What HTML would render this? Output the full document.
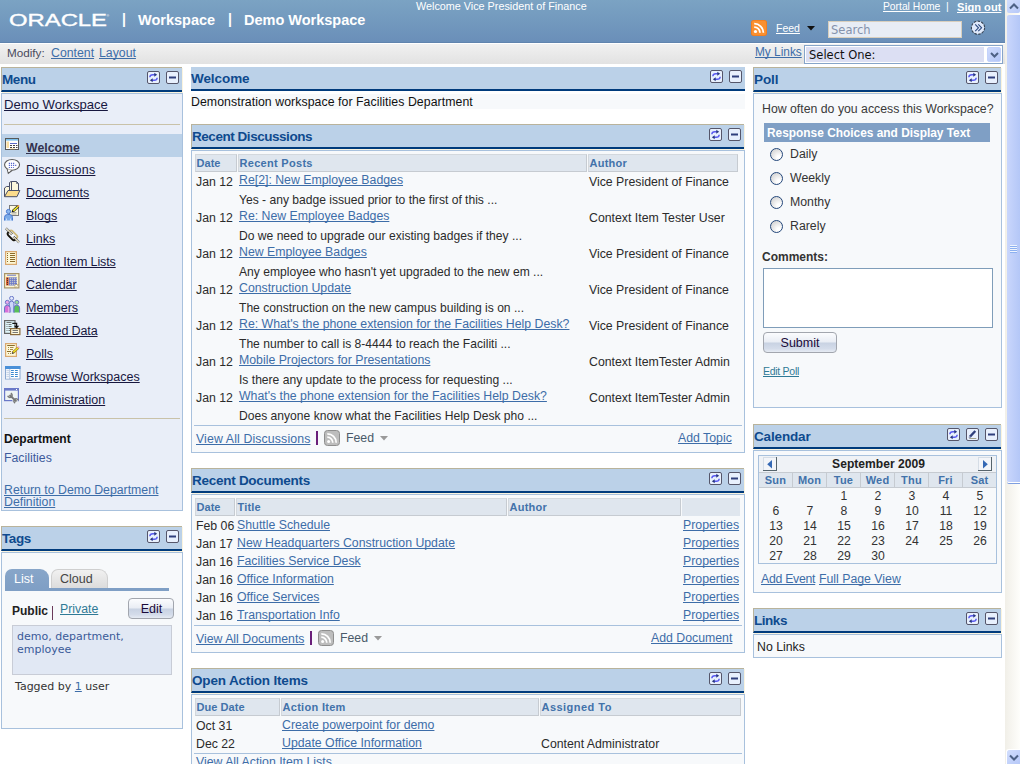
<!DOCTYPE html>
<html><head><meta charset="utf-8"><title>Demo Workspace</title>
<style>
*{box-sizing:border-box}
html,body{margin:0;padding:0}
body{width:1020px;height:764px;overflow:hidden;position:relative;background:#fff;font-family:"Liberation Sans",sans-serif;font-size:12.3px;color:#2b2b2b}
a{color:#3d6da8;text-decoration:underline;text-decoration-skip-ink:none}
.abs,.ph,.pb,.x{position:absolute}
.x{white-space:nowrap;line-height:14px}
#hdr{left:0;top:0;width:1005px;height:43px;background:linear-gradient(#7ba3c3,#6a8fb9);border-bottom:1px solid #6084ae}
#hdr .t{position:absolute;color:#fff;font-weight:bold;font-size:14.5px;top:12px;white-space:nowrap}
#hdr .sep{position:absolute;color:#fff;font-size:14px;font-weight:bold;top:11px}
#hdr a{color:#fff}
#bar{left:0;top:44px;width:1005px;height:20px;background:linear-gradient(#f1f1f1,#e2e2e2)}
.ph{height:25px;background:#bbd1e8;border-top:1px solid #b9b39b;border-left:1px solid #b9b39b;border-bottom:2px solid #003b7c;box-shadow:1px 1px 0 #fbf4de;color:#0e4a8e;font-weight:bold;font-size:13.5px;line-height:23px;padding-left:0px;white-space:nowrap}
.pb{background:#f7f9fb;border:1px solid #a8c1dd}
.ic{position:absolute;top:3px;width:13px;height:13px}
.th{position:absolute;height:18px;background:#dfe6ee;border:1px solid #c6cbd1;border-top-color:#d3d8dd;border-left-color:#d3d8dd;color:#4272aa;font-weight:bold;font-size:11px;line-height:16px;padding-left:0.5px;white-space:nowrap}
.mi{position:absolute;left:23px;color:#17173f;font-size:12.5px;white-space:nowrap;line-height:14px}
.mic{position:absolute;left:-1px;width:20px;height:18px}
.hr{position:absolute;height:1px;background:#c9c2a8}
.fl{position:absolute;height:1px;background:#a8c1dd}
.btn{position:absolute;border:1px solid #a2a6ae;border-radius:4px;background:linear-gradient(#fbfcfe 0%,#e9edf4 48%,#c8d2e2 52%,#d4dcea 82%,#e6ebf3 100%);color:#1a0a3a;font-size:12.5px;text-align:center;line-height:20px}
.rad{position:absolute;left:770px;width:13px;height:13px;border-radius:50%;border:1.300px solid #23477a;background:radial-gradient(circle at 72% 78%,#fff 15%,#c9c9c9 100%)}
.cd{position:absolute;width:34px;text-align:center;line-height:14px;color:#333;font-size:12.2px}
.dv{font-family:"DejaVu Sans","Liberation Sans",sans-serif}
</style></head><body>

<div id="hdr" class="abs">
<svg class="abs" style="left:8px;top:11px" width="104" height="18"><text x="1" y="14.900" fill="#fff" stroke="#fff" stroke-width="0.35" font-family="Liberation Sans, sans-serif" font-size="16.800" textLength="98" lengthAdjust="spacingAndGlyphs">ORACLE</text><text x="98.500" y="5.500" fill="#fff" font-family="Liberation Sans, sans-serif" font-size="3.500">®</text></svg>
<span class="sep" style="left:122px">|</span><span class="t" style="left:138px">Workspace</span>
<span class="sep" style="left:228px">|</span><span class="t" style="left:244px">Demo Workspace</span>
<span class="x" style="left:416px;top:-1px;color:#fff;font-size:10.8px">Welcome Vice President of Finance</span>
<a href="#" class="x" style="left:883px;top:0px;font-size:10.3px">Portal Home</a><span class="x" style="left:946px;top:-1px;color:#fff;font-size:10.5px">|</span>
<a href="#" class="x" style="left:957px;top:0px;font-weight:bold;font-size:11.1px">Sign out</a>
<svg class="abs" style="left:751px;top:20px" width="16" height="16" viewBox="0 0 15 15"><rect x="0" y="0" width="15" height="15" rx="2.500" fill="#f07c1e"/><rect x=".8" y=".8" width="13.400" height="13.400" rx="1.800" fill="#fa9030"/><circle cx="4.2" cy="10.8" r="1.5" fill="#fff"/><path d="M3 6.6a5.4 5.4 0 0 1 5.4 5.4M3 3.4a8.6 8.6 0 0 1 8.6 8.6" fill="none" stroke="#fff" stroke-width="1.7"/></svg>
<a href="#" class="x" style="left:776px;top:21px;font-size:10.5px">Feed</a>
<svg class="abs" style="left:807px;top:26px" width="8" height="5"><path d="M0 0h8L4 4.500z" fill="#111"/></svg>
<div class="abs dv" style="left:828px;top:21px;width:134px;height:17px;background:#e8edf5;border:1px solid #d9cfbd;color:#8492ac;font-size:11.5px;line-height:17px;padding-left:2px">Search</div>
<svg class="abs" style="left:970px;top:20px" width="16" height="16" viewBox="0 0 16 16"><circle cx="8" cy="7.700" r="6.600" fill="#dfe9fa" stroke="#384454" stroke-width="1.100" stroke-dasharray="2.600 1.200"/><path d="M5.200 4.400l3.300 3.400-3.300 3.400M8.300 4.400l3.300 3.400-3.300 3.400" fill="none" stroke="#2c4a80" stroke-width="1.100"/></svg>
</div>
<div id="bar" class="abs">
<span class="x" style="left:7px;top:2px;color:#4a4a5c;font-size:11.700px">Modify:</span><a href="#" class="x" style="left:51px;top:2px">Content</a><a href="#" class="x" style="left:99px;top:2px">Layout</a>
<a href="#" class="x" style="left:755px;top:1px;font-size:11.850px">My Links</a>
<div class="abs" style="left:804px;top:1px;width:199px;height:19px;background:#fff;border:1px solid #86a4c9"></div>
<div class="abs dv" style="left:806px;top:3px;width:178px;height:15px;background:#dcdff3;color:#111;font-size:11.500px;line-height:16px;padding-left:3px">Select One:</div>
<div class="abs" style="left:987px;top:3px;width:14px;height:15px;border-radius:2px;background:linear-gradient(135deg,#cfdbfd,#b3c6f7);border:1px solid #c3d2fb"></div>
<svg class="abs" style="left:990px;top:8px" width="9" height="7"><path d="M1 1l3.5 3.5L8 1" fill="none" stroke="#4d6185" stroke-width="2"/></svg>
</div>

<div class="ph" style="left:1px;top:67px;width:181px;letter-spacing:-0.43px">Menu<svg class="ic" style="left:145px" viewBox="0 0 13 13"><rect x=".5" y=".5" width="12" height="12" rx="1.500" fill="#e8f0fd" stroke="#55566a"/><path d="M2.800 6.300Q3 3.700 5.800 3.700H8" fill="none" stroke="#5a5af0" stroke-width="1.400"/><path d="M7.300 1.700l2.800 2-2.800 2z" fill="#26357e"/><path d="M10.200 6.700Q10 9.300 7.200 9.300H5" fill="none" stroke="#5a5af0" stroke-width="1.400"/><path d="M5.700 7.300l-2.800 2 2.800 2z" fill="#26357e"/></svg><svg class="ic" style="left:164px" viewBox="0 0 13 13"><rect x=".5" y=".5" width="12" height="12" rx="1.5" fill="#e8f0fd" stroke="#55566a"/><rect x="3" y="5.5" width="7" height="2" fill="#2f3f7c"/></svg></div>
<div class="pb" style="left:1px;top:93px;width:182px;height:418px;background:#e9eef8">
<div class="abs" style="left:0;top:40px;width:180px;height:23px;background:#bbd1e8"></div>
<div class="abs" style="left:1px;top:0">
<a href="#" class="mi" style="left:1px;top:4px;font-size:13.1px">Demo Workspace</a>
<div class="hr" style="left:1px;top:30px;width:176px"></div>
<svg class="mic" style="top:41px" viewBox="0 0 20 18"><rect x="3.5" y="3.5" width="13" height="11" fill="#fff" stroke="#595959"/><rect x="4" y="4" width="12" height="1.600" fill="#7ac0ec"/><rect x="4.500" y="6.500" width="2.500" height="6.500" fill="#f8dca0"/><path d="M8 8.500h7" stroke="#5a6ac8"/><path d="M8 10.500h7.500M8 12.500h7.500" stroke="#444" stroke-dasharray="2 1"/><path d="M8 13.700h5" stroke="#f8dca0" stroke-width=".8"/></svg>
<a href="#" class="mi" style="top:47px;font-weight:bold;color:#33334f;font-size:12.3px">Welcome</a>
<svg class="mic" style="top:64px" viewBox="0 0 20 18"><path d="M5.200 10.800L6.300 15.300L10.300 12.200" fill="#fff" stroke="#5a5a5a" stroke-width="1.100"/><ellipse cx="10.050" cy="6.850" rx="7.500" ry="5.400" fill="#fff" stroke="#5a5a5a" stroke-width="1.100"/><path d="M5.700 11.300l1 2.600 2.600-2.200z" fill="#fff"/><path d="M6.800 5.400h6M6.800 7.400h8M6.800 9.500h5" stroke="#5a6ad0" stroke-width="1.100" stroke-dasharray="1.200 .9"/></svg>
<a href="#" class="mi" style="top:69px;letter-spacing:.25px">Discussions</a>
<svg class="mic" style="top:87px" viewBox="0 0 20 18"><path d="M7.500 10V1.500L9 .5H13.500" fill="#fdf8dc" stroke="#4a5068"/><path d="M9.500 10V.5H14.500L16.500 2.500V10z" fill="#fdf8dc" stroke="#4a5068"/><path d="M14.500 .5V2.500H16.500" fill="none" stroke="#4a5068" stroke-width=".7"/><path d="M2.500 15.500V7L4.500 5.500H7.500V10" fill="#fdf8dc" stroke="#4a5068"/><path d="M6 9.500H17.800L15 15.700H2.500z" fill="#fbdc8c" stroke="#4a5068"/></svg>
<a href="#" class="mi" style="top:92px">Documents</a>
<svg class="mic" style="top:110px" viewBox="0 0 20 18"><rect x="7.500" y="1.500" width="9" height="10" fill="#fdf8dc" stroke="#7a7a7a"/><path d="M9.500 8.500h5M9.500 10h5" stroke="#999" stroke-width=".8"/><path d="M10.800 7.200L16.300 2.200" stroke="#222" stroke-width="2.800"/><path d="M11.300 6.800L16 2.500" stroke="#f4ea20" stroke-width="1.600"/><path d="M9.600 8.300l.6-2 1.500 1.500z" fill="#111"/><circle cx="16.400" cy="2.100" r="1" fill="#f09a4a"/><circle cx="6.500" cy="7.500" r="2.100" fill="#8ab8f0" stroke="#4a7ad0"/><path d="M2.500 16.500V13.500a3 3 0 0 1 3-3h2a3 3 0 0 1 3 3V16.500" fill="#7aaae8" stroke="#4a7ad0"/><path d="M4.500 16.500v-2M8.500 16.500v-2" stroke="#dfeafc" stroke-width=".8"/></svg>
<a href="#" class="mi" style="top:115px">Blogs</a>
<svg class="mic" style="top:133px" viewBox="0 0 20 18"><g transform="translate(10.500 8.300) rotate(45)"><rect x="-5" y="-3" width="10" height="6" rx="2" fill="none" stroke="#cdb877" stroke-width="1.700"/><path d="M-5 -.5v1.500a2 2 0 0 0 2 2h6a2 2 0 0 0 2-2V.5" fill="none" stroke="#111" stroke-width="1.700"/><circle r="1.300" fill="#fff"/></g><path d="M4 1.300L10 7.300M11.500 9.800L17 15.300" stroke="#2a2a2a" stroke-width="2.400" stroke-dasharray="1 .5"/><path d="M4 1.300L10 7.300M11.500 9.800L17 15.300" stroke="#f3ebcd" stroke-width="1.200"/></svg>
<a href="#" class="mi" style="top:138px">Links</a>
<svg class="mic" style="top:156px" viewBox="0 0 20 18"><rect x="3.600" y="1.600" width="10.800" height="12.800" fill="#fdf8d8" stroke="#d9a870" stroke-width="1.200"/><path d="M5 3.500h1M5 5.500h1M5 7.500h1M5 9.500h1M5 11.500h1M8 3.500h5M8 5.500h5M8 7.500h5M8 9.500h5M8 11.500h5" stroke="#8a6a2a"/></svg>
<a href="#" class="mi" style="top:161px;letter-spacing:-.12px">Action Item Lists</a>
<svg class="mic" style="top:179px" viewBox="0 0 20 18"><rect x="2.600" y=".6" width="14.300" height="14.300" fill="#fdf6d0" stroke="#a89468" stroke-width="1.200"/><path d="M5 2.200h9" stroke="#6a78c8"/><rect x="4" y="4.300" width="2.800" height="8.200" fill="#e86a3a"/><rect x="6.800" y="4.300" width="8.200" height="8.200" fill="#6a78c8"/><path d="M4.900 5.300h1M4.900 7.300h1M4.900 9.300h1M4.900 11.300h1" stroke="#111"/><path d="M7.800 5.300h7M7.800 7.300h7M7.800 9.300h7M7.800 11.300h5" stroke="#fdf6d0" stroke-width=".9" stroke-dasharray="1 1"/><path d="M13 15V11.500H16.800z" fill="#fdf6d0" stroke="#a89468" stroke-width=".6"/><circle cx="14.300" cy="12.800" r=".7" fill="#fff"/></svg>
<a href="#" class="mi" style="top:184px">Calendar</a>
<svg class="mic" style="top:202px" viewBox="0 0 20 18"><circle cx="9.600" cy="2.300" r="2" fill="#e4eafd" stroke="#6a78c8"/><path d="M7.300 16.500V7.500a2.300 2.300 0 0 1 4.600 0V16.500" fill="#ccd6fa" stroke="#6a78c8"/><circle cx="5.300" cy="6.300" r="2" fill="#eaa8ea" stroke="#6a78c8"/><path d="M2.500 16.500V12a2.800 2.800 0 0 1 5.600 0V16.500" fill="#d870d8" stroke="#6a78c8"/><circle cx="14.800" cy="6.300" r="2" fill="#98dc98" stroke="#6a78c8"/><path d="M12 16.500V12a2.800 2.800 0 0 1 5.600 0V16.500" fill="#58c058" stroke="#6a78c8"/><path d="M6.800 16.500V11" stroke="#f4d8f4" stroke-width=".8"/></svg>
<a href="#" class="mi" style="top:207px">Members</a>
<svg class="mic" style="top:225px" viewBox="0 0 20 18"><rect x="2.600" y="1.600" width="10.400" height="12.800" fill="#dff6fb" stroke="#666" stroke-width="1.200"/><path d="M4.500 3.500h5M4.500 5.500h1M6.500 5.500h3M4.500 7.500h1M6.500 7.500h3M4.500 9.500h1M6.500 9.500h1.500M4.500 11.500h1M6.500 11.500h1.500" stroke="#777"/><rect x="8.600" y="9.600" width="9.300" height="6" fill="#fdf8dc" stroke="#8a6a3a" stroke-width="1.200"/><path d="M10.500 11.500h5.500M10.500 13.500h5.500" stroke="#777"/><path d="M10.300 4.300H14.600V8" fill="none" stroke="#111" stroke-width="1.300"/><path d="M12 6.800h5.200l-2.600 2.900z" fill="#111"/></svg>
<a href="#" class="mi" style="top:230px;letter-spacing:-.12px">Related Data</a>
<svg class="mic" style="top:248px" viewBox="0 0 20 18"><rect x="3.600" y="1.600" width="10.800" height="12.800" fill="#fdf8d8" stroke="#d9a870" stroke-width="1.200"/><path d="M5.200 3.500h7.600M5 9.500h4" stroke="#8a6a2a" stroke-width="1.100"/><path d="M6 5.500h1M8 5.500h3.500M6 7.500h1M8 7.500h3M6 11.500h1M8 11.500h1" stroke="#a88a4a"/><path d="M10.800 10.800L16.400 5.600" stroke="#8a6a2a" stroke-width="2.600"/><path d="M11.300 10.300L16.200 5.800" stroke="#f4ea20" stroke-width="1.500"/><path d="M9.700 11.900l.6-2 1.500 1.500z" fill="#333"/><circle cx="16.600" cy="5.300" r="1" fill="#f0a8c8"/></svg>
<a href="#" class="mi" style="top:253px">Polls</a>
<svg class="mic" style="top:271px" viewBox="0 0 20 18"><rect x="3.500" y="1.500" width="14.500" height="12.500" fill="#fff" stroke="#8aa8d0"/><rect x="3" y="1" width="15.500" height="3" fill="#4a90d8"/><rect x="4" y="4" width="3.500" height="9.500" fill="#f0f4fa"/><path d="M7.800 4v10" stroke="#9ab4d8" stroke-width=".8"/><path d="M4.500 5.500h2.500M4.500 7.500h2.500M4.500 9.500h2.500M4.500 11.500h2.500" stroke="#b8c8e0" stroke-width=".7"/><path d="M9 5.500h2.800M13 5.500h2.800M9 7.500h2.800M13 7.500h2.800M9 9.500h2.800M13 9.500h2.800M9 11.500h2.800M13 11.500h2.800" stroke="#3a8ad0" stroke-width="1.200"/></svg>
<a href="#" class="mi" style="top:276px">Browse Workspaces</a>
<svg class="mic" style="top:294px" viewBox="0 0 20 18"><rect x="2.600" y=".6" width="13.800" height="12" fill="#eef4f4" stroke="#6a78c8" stroke-width="1.200"/><rect x="2.600" y=".6" width="13.800" height="2" fill="#6a78c8"/><rect x="14" y="1" width="1" height="1" fill="#fff"/><path d="M7 6.500L15 14" stroke="#eef4f4" stroke-width="4"/><path d="M7.500 7L14.500 13.500" stroke="#777" stroke-width="1.800"/><path d="M8.800 5.200a2.200 2.200 0 1 1-3 2.600" fill="none" stroke="#777" stroke-width="1.500"/><path d="M13.200 15a2.200 2.200 0 1 1 3-2.600" fill="none" stroke="#777" stroke-width="1.500"/></svg>
<a href="#" class="mi" style="top:299px">Administration</a>
<div class="hr" style="left:1px;top:324px;width:176px"></div>
<span class="x" style="left:1px;top:338px;font-weight:bold;color:#111;font-size:12px">Department</span>
<span class="x" style="left:1px;top:357px;color:#3d5a9c">Facilities</span>
<a href="#" class="abs" style="left:1px;top:390px;width:170px;line-height:12px">Return to Demo Department Definition</a>
</div></div>
<div class="ph" style="left:1px;top:526px;width:181px;letter-spacing:-0.42px">Tags<svg class="ic" style="left:145px" viewBox="0 0 13 13"><rect x=".5" y=".5" width="12" height="12" rx="1.500" fill="#e8f0fd" stroke="#55566a"/><path d="M2.800 6.300Q3 3.700 5.800 3.700H8" fill="none" stroke="#5a5af0" stroke-width="1.400"/><path d="M7.300 1.700l2.800 2-2.800 2z" fill="#26357e"/><path d="M10.200 6.700Q10 9.300 7.200 9.300H5" fill="none" stroke="#5a5af0" stroke-width="1.400"/><path d="M5.700 7.300l-2.800 2 2.800 2z" fill="#26357e"/></svg><svg class="ic" style="left:164px" viewBox="0 0 13 13"><rect x=".5" y=".5" width="12" height="12" rx="1.5" fill="#e8f0fd" stroke="#55566a"/><rect x="3" y="5.5" width="7" height="2" fill="#2f3f7c"/></svg></div>
<div class="pb" style="left:1px;top:552px;width:182px;height:177px">
<div class="abs" style="left:1px;top:0">
<div class="abs" style="left:2px;top:35px;width:164px;height:3px;background:#7f9fc5"></div>
<div class="abs" style="left:2px;top:16px;width:44px;height:20px;background:linear-gradient(#88a6c9,#7f9fc5);border-radius:7px 9px 0 0;color:#fff;font-size:12.500px;text-align:left;padding-left:9px;line-height:21px">List</div>
<div class="abs" style="left:48px;top:16px;width:57px;height:19px;background:linear-gradient(#f1f1f1,#dcdcdc);border:1px solid #cfcfcf;border-bottom:none;border-radius:7px 9px 0 0;color:#444;font-size:12.500px;text-align:left;padding-left:8px;line-height:19px">Cloud</div>
<span class="x" style="left:9px;top:51px;font-weight:bold;color:#222;font-size:12px">Public</span><span class="abs" style="left:49px;top:53px;width:1px;height:14px;background:#6a3a5a"></span>
<a href="#" class="x" style="left:57px;top:49px;color:#2f7a96">Private</a>
<div class="btn" style="left:125px;top:45px;width:46px;height:21px;padding-left:1px;line-height:20px">Edit</div>
<div class="abs dv" style="left:9px;top:72px;width:160px;height:50px;background:#e1e8f4;border:1px solid #c8ccd6;color:#3a5a98;font-size:11px;line-height:13px;padding:4px 0 0 4px">demo, department,<br>employee</div>
<span class="x dv" style="left:12px;top:127px;font-size:11px;color:#333">Tagged by <a href="#">1</a> user</span>
</div></div>
<div class="ph" style="left:191px;top:67px;width:554px;letter-spacing:-0.07px;border-top:none;border-left:none;height:24px;padding-left:0;box-shadow:none">Welcome<svg class="ic" style="left:519px" viewBox="0 0 13 13"><rect x=".5" y=".5" width="12" height="12" rx="1.500" fill="#e8f0fd" stroke="#55566a"/><path d="M2.800 6.300Q3 3.700 5.800 3.700H8" fill="none" stroke="#5a5af0" stroke-width="1.400"/><path d="M7.300 1.700l2.800 2-2.800 2z" fill="#26357e"/><path d="M10.200 6.700Q10 9.300 7.200 9.300H5" fill="none" stroke="#5a5af0" stroke-width="1.400"/><path d="M5.700 7.300l-2.800 2 2.800 2z" fill="#26357e"/></svg><svg class="ic" style="left:538px" viewBox="0 0 13 13"><rect x=".5" y=".5" width="12" height="12" rx="1.5" fill="#e8f0fd" stroke="#55566a"/><rect x="3" y="5.5" width="7" height="2" fill="#2f3f7c"/></svg></div>
<div class="abs" style="left:191px;top:94px;width:554px;height:15px;background:#f7f9fb"></div>
<span class="x" style="left:191px;top:95px;color:#111;letter-spacing:.06px">Demonstration workspace for Facilities Department</span>
<div class="ph" style="left:191px;top:124px;width:553px;letter-spacing:-0.46px">Recent Discussions<svg class="ic" style="left:517px" viewBox="0 0 13 13"><rect x=".5" y=".5" width="12" height="12" rx="1.500" fill="#e8f0fd" stroke="#55566a"/><path d="M2.800 6.300Q3 3.700 5.800 3.700H8" fill="none" stroke="#5a5af0" stroke-width="1.400"/><path d="M7.300 1.700l2.800 2-2.800 2z" fill="#26357e"/><path d="M10.200 6.700Q10 9.300 7.200 9.300H5" fill="none" stroke="#5a5af0" stroke-width="1.400"/><path d="M5.700 7.300l-2.800 2 2.800 2z" fill="#26357e"/></svg><svg class="ic" style="left:536px" viewBox="0 0 13 13"><rect x=".5" y=".5" width="12" height="12" rx="1.5" fill="#e8f0fd" stroke="#55566a"/><rect x="3" y="5.5" width="7" height="2" fill="#2f3f7c"/></svg></div>
<div class="pb" style="left:191px;top:150px;width:554px;height:303px">
<div class="th" style="left:3px;top:3px;width:42px;letter-spacing:0.05px">Date</div>
<div class="th" style="left:46px;top:3px;width:349px;letter-spacing:0.30px">Recent Posts</div>
<div class="th" style="left:396px;top:3px;width:150px;letter-spacing:0.25px">Author</div>
<span class="x" style="left:4px;top:24px">Jan 12</span>
<a href="#" class="x" style="left:47px;top:22px">Re[2]: New Employee Badges</a>
<span class="x" style="left:397px;top:24px">Vice President of Finance</span>
<span class="x" style="left:47px;top:42px;font-size:12.1px">Yes - any badge issued prior to the first of this ...</span>
<span class="x" style="left:4px;top:60px">Jan 12</span>
<a href="#" class="x" style="left:47px;top:58px">Re: New Employee Badges</a>
<span class="x" style="left:397px;top:60px">Context Item Tester User</span>
<span class="x" style="left:47px;top:78px;font-size:12.1px">Do we need to upgrade our existing badges if they ...</span>
<span class="x" style="left:4px;top:96px">Jan 12</span>
<a href="#" class="x" style="left:47px;top:94px">New Employee Badges</a>
<span class="x" style="left:397px;top:96px">Vice President of Finance</span>
<span class="x" style="left:47px;top:114px;font-size:12.1px">Any employee who hasn't yet upgraded to the new em ...</span>
<span class="x" style="left:4px;top:132px">Jan 12</span>
<a href="#" class="x" style="left:47px;top:130px">Construction Update</a>
<span class="x" style="left:397px;top:132px">Vice President of Finance</span>
<span class="x" style="left:47px;top:150px;font-size:12.1px">The construction on the new campus building is on ...</span>
<span class="x" style="left:4px;top:168px">Jan 12</span>
<a href="#" class="x" style="left:47px;top:166px">Re: What's the phone extension for the Facilities Help Desk?</a>
<span class="x" style="left:397px;top:168px">Vice President of Finance</span>
<span class="x" style="left:47px;top:186px;font-size:12.1px">The number to call is 8-4444 to reach the Faciliti ...</span>
<span class="x" style="left:4px;top:204px">Jan 12</span>
<a href="#" class="x" style="left:47px;top:202px">Mobile Projectors for Presentations</a>
<span class="x" style="left:397px;top:204px">Context ItemTester Admin</span>
<span class="x" style="left:47px;top:222px;font-size:12.1px">Is there any update to the process for requesting ...</span>
<span class="x" style="left:4px;top:240px">Jan 12</span>
<a href="#" class="x" style="left:47px;top:238px">What's the phone extension for the Facilities Help Desk?</a>
<span class="x" style="left:397px;top:240px">Context ItemTester Admin</span>
<span class="x" style="left:47px;top:258px;font-size:12.1px">Does anyone know what the Facilities Help Desk pho ...</span>
<div class="fl" style="left:2px;top:274px;width:548px"></div>
<a href="#" class="x" style="left:4px;top:281px;letter-spacing:.13px">View All Discussions</a>
<span class="abs" style="left:124px;top:280px;width:1.500px;height:14px;background:#6a1f7a"></span>
<svg class="abs" style="left:132px;top:279px" width="16" height="16" viewBox="0 0 16 16"><rect x=".5" y=".5" width="15" height="15" rx="3" fill="#bdbdbd" stroke="#8e8e8e"/><circle cx="4.600" cy="11.400" r="1.500" fill="#fff"/><path d="M3.300 7.200a5.500 5.500 0 0 1 5.500 5.500M3.300 3.800a8.900 8.900 0 0 1 8.900 8.900" fill="none" stroke="#fff" stroke-width="1.700"/></svg>
<span class="x" style="left:154px;top:280px;color:#4a5a6a">Feed</span>
<svg class="abs" style="left:188px;top:285px" width="8" height="5"><path d="M0 0h8L4 4.500z" fill="#9a9a9a"/></svg>
<a href="#" class="x" style="left:486px;top:280px">Add Topic</a>
</div>
<div class="ph" style="left:191px;top:468px;width:553px;letter-spacing:-0.27px">Recent Documents<svg class="ic" style="left:517px" viewBox="0 0 13 13"><rect x=".5" y=".5" width="12" height="12" rx="1.500" fill="#e8f0fd" stroke="#55566a"/><path d="M2.800 6.300Q3 3.700 5.800 3.700H8" fill="none" stroke="#5a5af0" stroke-width="1.400"/><path d="M7.300 1.700l2.800 2-2.800 2z" fill="#26357e"/><path d="M10.200 6.700Q10 9.300 7.200 9.300H5" fill="none" stroke="#5a5af0" stroke-width="1.400"/><path d="M5.700 7.300l-2.800 2 2.800 2z" fill="#26357e"/></svg><svg class="ic" style="left:536px" viewBox="0 0 13 13"><rect x=".5" y=".5" width="12" height="12" rx="1.5" fill="#e8f0fd" stroke="#55566a"/><rect x="3" y="5.5" width="7" height="2" fill="#2f3f7c"/></svg></div>
<div class="pb" style="left:191px;top:494px;width:554px;height:159px">
<div class="th" style="left:3px;top:3px;width:40px;letter-spacing:0.05px">Date</div>
<div class="th" style="left:44px;top:3px;width:271px;letter-spacing:0.20px">Title</div>
<div class="th" style="left:316px;top:3px;width:173px;letter-spacing:0.25px">Author</div>
<div class="abs" style="left:490px;top:3px;width:58px;height:18px;background:#dfe6ee"></div>
<span class="x" style="left:4px;top:24px">Feb 06</span>
<a href="#" class="x" style="left:45px;top:23px">Shuttle Schedule</a>
<a href="#" class="x" style="left:491px;top:23px">Properties</a>
<span class="x" style="left:4px;top:42px">Jan 17</span>
<a href="#" class="x" style="left:45px;top:41px">New Headquarters Construction Update</a>
<a href="#" class="x" style="left:491px;top:41px">Properties</a>
<span class="x" style="left:4px;top:60px">Jan 16</span>
<a href="#" class="x" style="left:45px;top:59px">Facilities Service Desk</a>
<a href="#" class="x" style="left:491px;top:59px">Properties</a>
<span class="x" style="left:4px;top:78px">Jan 16</span>
<a href="#" class="x" style="left:45px;top:77px">Office Information</a>
<a href="#" class="x" style="left:491px;top:77px">Properties</a>
<span class="x" style="left:4px;top:96px">Jan 16</span>
<a href="#" class="x" style="left:45px;top:95px">Office Services</a>
<a href="#" class="x" style="left:491px;top:95px">Properties</a>
<span class="x" style="left:4px;top:114px">Jan 16</span>
<a href="#" class="x" style="left:45px;top:113px">Transportation Info</a>
<a href="#" class="x" style="left:491px;top:113px">Properties</a>
<div class="fl" style="left:2px;top:130px;width:548px"></div>
<a href="#" class="x" style="left:4px;top:137px">View All Documents</a>
<span class="abs" style="left:118px;top:136px;width:1.500px;height:14px;background:#6a1f7a"></span>
<svg class="abs" style="left:126px;top:135px" width="16" height="16" viewBox="0 0 16 16"><rect x=".5" y=".5" width="15" height="15" rx="3" fill="#bdbdbd" stroke="#8e8e8e"/><circle cx="4.600" cy="11.400" r="1.500" fill="#fff"/><path d="M3.300 7.200a5.500 5.500 0 0 1 5.500 5.500M3.300 3.800a8.900 8.900 0 0 1 8.900 8.900" fill="none" stroke="#fff" stroke-width="1.700"/></svg>
<span class="x" style="left:148px;top:136px;color:#4a5a6a">Feed</span>
<svg class="abs" style="left:182px;top:141px" width="8" height="5"><path d="M0 0h8L4 4.500z" fill="#9a9a9a"/></svg>
<a href="#" class="x" style="left:459px;top:136px">Add Document</a>
</div>
<div class="ph" style="left:191px;top:668px;width:553px;letter-spacing:-0.17px">Open Action Items<svg class="ic" style="left:517px" viewBox="0 0 13 13"><rect x=".5" y=".5" width="12" height="12" rx="1.500" fill="#e8f0fd" stroke="#55566a"/><path d="M2.800 6.300Q3 3.700 5.800 3.700H8" fill="none" stroke="#5a5af0" stroke-width="1.400"/><path d="M7.300 1.700l2.800 2-2.800 2z" fill="#26357e"/><path d="M10.200 6.700Q10 9.300 7.200 9.300H5" fill="none" stroke="#5a5af0" stroke-width="1.400"/><path d="M5.700 7.300l-2.800 2 2.800 2z" fill="#26357e"/></svg><svg class="ic" style="left:536px" viewBox="0 0 13 13"><rect x=".5" y=".5" width="12" height="12" rx="1.5" fill="#e8f0fd" stroke="#55566a"/><rect x="3" y="5.5" width="7" height="2" fill="#2f3f7c"/></svg></div>
<div class="pb" style="left:191px;top:694px;width:554px;height:100px">
<div class="th" style="left:3px;top:3px;width:85px;letter-spacing:0.05px">Due Date</div>
<div class="th" style="left:89px;top:3px;width:258px;letter-spacing:0.30px">Action Item</div>
<div class="th" style="left:348px;top:3px;width:201px;letter-spacing:0.47px">Assigned To</div>
<span class="x" style="left:4px;top:24px">Oct 31</span>
<a href="#" class="x" style="left:90px;top:23px">Create powerpoint for demo</a>
<span class="x" style="left:4px;top:42px">Dec 22</span>
<a href="#" class="x" style="left:90px;top:41px">Update Office Information</a>
<span class="x" style="left:349px;top:42px">Content Administrator</span>
<div class="fl" style="left:2px;top:58px;width:548px"></div>
<a href="#" class="x" style="left:4px;top:60px">View All Action Item Lists</a>
</div>
<div class="ph" style="left:753px;top:67px;width:248px;letter-spacing:-0.11px">Poll<svg class="ic" style="left:212px" viewBox="0 0 13 13"><rect x=".5" y=".5" width="12" height="12" rx="1.500" fill="#e8f0fd" stroke="#55566a"/><path d="M2.800 6.300Q3 3.700 5.800 3.700H8" fill="none" stroke="#5a5af0" stroke-width="1.400"/><path d="M7.300 1.700l2.800 2-2.800 2z" fill="#26357e"/><path d="M10.200 6.700Q10 9.300 7.200 9.300H5" fill="none" stroke="#5a5af0" stroke-width="1.400"/><path d="M5.700 7.300l-2.800 2 2.800 2z" fill="#26357e"/></svg><svg class="ic" style="left:231px" viewBox="0 0 13 13"><rect x=".5" y=".5" width="12" height="12" rx="1.5" fill="#e8f0fd" stroke="#55566a"/><rect x="3" y="5.5" width="7" height="2" fill="#2f3f7c"/></svg></div>
<div class="pb" style="left:753px;top:93px;width:249px;height:315px">
<span class="x" style="left:8px;top:8px;color:#3a3a3a">How often do you access this Workspace?</span>
<div class="abs" style="left:10px;top:29px;width:226px;height:19px;background:#7f9fc5;color:#fff;font-weight:bold;font-size:11.900px;line-height:20px;padding-left:3px;white-space:nowrap">Response Choices and Display Text</div>
<div class="rad" style="left:16px;top:54px"></div>
<span class="x" style="left:36px;top:53px;color:#333">Daily</span>
<div class="rad" style="left:16px;top:78px"></div>
<span class="x" style="left:36px;top:77px;color:#333">Weekly</span>
<div class="rad" style="left:16px;top:102px"></div>
<span class="x" style="left:36px;top:101px;color:#333">Monthy</span>
<div class="rad" style="left:16px;top:126px"></div>
<span class="x" style="left:36px;top:125px;color:#333">Rarely</span>
<span class="x" style="left:8px;top:156px;font-weight:bold;color:#333;font-size:12px">Comments:</span>
<div class="abs" style="left:9px;top:174px;width:230px;height:60px;background:#fff;border:1px solid #7f9db9"></div>
<div class="btn" style="left:9px;top:238px;width:74px;height:21px">Submit</div>
<a href="#" class="x" style="left:9px;top:270px;font-size:10.500px;letter-spacing:-.28px;color:#2f7a96">Edit Poll</a>
</div>
<div class="ph" style="left:753px;top:424px;width:248px;letter-spacing:-0.15px">Calendar<svg class="ic" style="left:193px" viewBox="0 0 13 13"><rect x=".5" y=".5" width="12" height="12" rx="1.500" fill="#e8f0fd" stroke="#55566a"/><path d="M2.800 6.300Q3 3.700 5.800 3.700H8" fill="none" stroke="#5a5af0" stroke-width="1.400"/><path d="M7.300 1.700l2.800 2-2.800 2z" fill="#26357e"/><path d="M10.200 6.700Q10 9.300 7.200 9.300H5" fill="none" stroke="#5a5af0" stroke-width="1.400"/><path d="M5.700 7.300l-2.800 2 2.800 2z" fill="#26357e"/></svg><svg class="ic" style="left:212px" viewBox="0 0 13 13"><rect x=".5" y=".5" width="12" height="12" rx="1.500" fill="#e8f0fd" stroke="#55566a"/><path d="M3.300 10.500h7" stroke="#a3a38c" stroke-width="1"/><path d="M4 8.600L9.300 3" stroke="#2f3f7c" stroke-width="2.300"/><path d="M3 9.800l.5-1.800 1.400 1.300z" fill="#fff" stroke="#2f3f7c" stroke-width=".4"/></svg><svg class="ic" style="left:231px" viewBox="0 0 13 13"><rect x=".5" y=".5" width="12" height="12" rx="1.5" fill="#e8f0fd" stroke="#55566a"/><rect x="3" y="5.5" width="7" height="2" fill="#2f3f7c"/></svg></div>
<div class="pb" style="left:753px;top:450px;width:249px;height:143px">
<div class="abs" style="left:4px;top:4px;width:239px;height:109px;border:1px solid #a8c1dd"></div>
<div class="abs" style="left:5px;top:5px;width:237px;height:16px;background:#eff2f6"></div>
<div class="abs" style="left:5px;top:6px;width:237px;text-align:center;font-weight:bold;color:#222;line-height:14px;font-size:12.1px;padding-left:2px">September 2009</div>
<svg class="abs" style="left:9px;top:6px" width="14" height="14" viewBox="0 0 14 14"><rect x="0" y="0" width="14" height="14" fill="#56646c"/><rect x="0" y="0" width="13" height="13" fill="#d5dde6"/><rect x="1" y="1" width="12" height="12" fill="#f3f5f9"/><path d="M9 3v8.500L4.200 7.200z" fill="#3468b4"/></svg>
<svg class="abs" style="left:224px;top:6px" width="14" height="14" viewBox="0 0 14 14"><rect x="0" y="0" width="14" height="14" fill="#56646c"/><rect x="0" y="0" width="13" height="13" fill="#d5dde6"/><rect x="1" y="1" width="12" height="12" fill="#f3f5f9"/><path d="M5 3v8.500L9.800 7.200z" fill="#3468b4"/></svg>
<div class="abs" style="left:5px;top:21px;width:34px;height:16px;background:#dfe6ee;border-top:1px solid #c6cbd1;border-bottom:1px solid #c6cbd1;border-right:1px solid #c6cbd1;text-align:center;color:#4272aa;font-weight:bold;font-size:11px;line-height:15px;letter-spacing:.2px">Sun</div>
<div class="abs" style="left:39px;top:21px;width:34px;height:16px;background:#dfe6ee;border-top:1px solid #c6cbd1;border-bottom:1px solid #c6cbd1;border-right:1px solid #c6cbd1;text-align:center;color:#4272aa;font-weight:bold;font-size:11px;line-height:15px;letter-spacing:.2px">Mon</div>
<div class="abs" style="left:73px;top:21px;width:34px;height:16px;background:#dfe6ee;border-top:1px solid #c6cbd1;border-bottom:1px solid #c6cbd1;border-right:1px solid #c6cbd1;text-align:center;color:#4272aa;font-weight:bold;font-size:11px;line-height:15px;letter-spacing:.2px">Tue</div>
<div class="abs" style="left:107px;top:21px;width:34px;height:16px;background:#dfe6ee;border-top:1px solid #c6cbd1;border-bottom:1px solid #c6cbd1;border-right:1px solid #c6cbd1;text-align:center;color:#4272aa;font-weight:bold;font-size:11px;line-height:15px;letter-spacing:.2px">Wed</div>
<div class="abs" style="left:141px;top:21px;width:34px;height:16px;background:#dfe6ee;border-top:1px solid #c6cbd1;border-bottom:1px solid #c6cbd1;border-right:1px solid #c6cbd1;text-align:center;color:#4272aa;font-weight:bold;font-size:11px;line-height:15px;letter-spacing:.2px">Thu</div>
<div class="abs" style="left:175px;top:21px;width:34px;height:16px;background:#dfe6ee;border-top:1px solid #c6cbd1;border-bottom:1px solid #c6cbd1;border-right:1px solid #c6cbd1;text-align:center;color:#4272aa;font-weight:bold;font-size:11px;line-height:15px;letter-spacing:.2px">Fri</div>
<div class="abs" style="left:209px;top:21px;width:33px;height:16px;background:#dfe6ee;border-top:1px solid #c6cbd1;border-bottom:1px solid #c6cbd1;text-align:center;color:#4272aa;font-weight:bold;font-size:11px;line-height:15px;letter-spacing:.2px">Sat</div>
<span class="cd" style="left:73px;top:38px">1</span>
<span class="cd" style="left:107px;top:38px">2</span>
<span class="cd" style="left:141px;top:38px">3</span>
<span class="cd" style="left:175px;top:38px">4</span>
<span class="cd" style="left:209px;top:38px">5</span>
<span class="cd" style="left:5px;top:53px">6</span>
<span class="cd" style="left:39px;top:53px">7</span>
<span class="cd" style="left:73px;top:53px">8</span>
<span class="cd" style="left:107px;top:53px">9</span>
<span class="cd" style="left:141px;top:53px">10</span>
<span class="cd" style="left:175px;top:53px">11</span>
<span class="cd" style="left:209px;top:53px">12</span>
<span class="cd" style="left:5px;top:68px">13</span>
<span class="cd" style="left:39px;top:68px">14</span>
<span class="cd" style="left:73px;top:68px">15</span>
<span class="cd" style="left:107px;top:68px">16</span>
<span class="cd" style="left:141px;top:68px">17</span>
<span class="cd" style="left:175px;top:68px">18</span>
<span class="cd" style="left:209px;top:68px">19</span>
<span class="cd" style="left:5px;top:83px">20</span>
<span class="cd" style="left:39px;top:83px">21</span>
<span class="cd" style="left:73px;top:83px">22</span>
<span class="cd" style="left:107px;top:83px">23</span>
<span class="cd" style="left:141px;top:83px">24</span>
<span class="cd" style="left:175px;top:83px">25</span>
<span class="cd" style="left:209px;top:83px">26</span>
<span class="cd" style="left:5px;top:98px">27</span>
<span class="cd" style="left:39px;top:98px">28</span>
<span class="cd" style="left:73px;top:98px">29</span>
<span class="cd" style="left:107px;top:98px">30</span>
<a href="#" class="x" style="left:7px;top:121px;letter-spacing:-.28px">Add Event</a>
<a href="#" class="x" style="left:65px;top:121px">Full Page View</a>
</div>
<div class="ph" style="left:753px;top:608px;width:248px;letter-spacing:-0.46px">Links<svg class="ic" style="left:212px" viewBox="0 0 13 13"><rect x=".5" y=".5" width="12" height="12" rx="1.500" fill="#e8f0fd" stroke="#55566a"/><path d="M2.800 6.300Q3 3.700 5.800 3.700H8" fill="none" stroke="#5a5af0" stroke-width="1.400"/><path d="M7.300 1.700l2.800 2-2.800 2z" fill="#26357e"/><path d="M10.200 6.700Q10 9.300 7.200 9.300H5" fill="none" stroke="#5a5af0" stroke-width="1.400"/><path d="M5.700 7.300l-2.800 2 2.800 2z" fill="#26357e"/></svg><svg class="ic" style="left:231px" viewBox="0 0 13 13"><rect x=".5" y=".5" width="12" height="12" rx="1.5" fill="#e8f0fd" stroke="#55566a"/><rect x="3" y="5.5" width="7" height="2" fill="#2f3f7c"/></svg></div>
<div class="pb" style="left:753px;top:634px;width:249px;height:24px">
<span class="x" style="left:3px;top:5px;color:#222">No Links</span>
</div>
<div class="abs" style="left:1005px;top:0;width:15px;height:764px;background:linear-gradient(90deg,#f1efe8,#fefefb)"></div>
<div class="abs" style="left:1007px;top:0;width:13px;height:12.500px;background:linear-gradient(135deg,#d2defd,#b6c8f8);border-radius:0 0 2px 2px"></div>
<svg class="abs" style="left:1009px;top:2px" width="10" height="8"><path d="M1 6.500l4-4 4 4" fill="none" stroke="#4d6185" stroke-width="2"/></svg>
<div class="abs" style="left:1007px;top:15px;width:13px;height:468px;background:linear-gradient(90deg,#c9d6fc,#b4c7f7);border-radius:2px 0 0 2px;border-bottom:1px solid #fff;box-shadow:0 1px 0 #7f9fe0"></div>
<div class="abs" style="left:1010px;top:245px;width:7px;height:8px;background:repeating-linear-gradient(#eef4fe 0,#eef4fe 1px,#8cb0f0 1px,#8cb0f0 2px)"></div>
<div class="abs" style="left:1006px;top:749px;width:14px;height:15px;background:linear-gradient(135deg,#d2defd,#b6c8f8);border-radius:3px 0 0 0;border-top:1px solid #fff;border-left:1px solid #fff"></div>
<svg class="abs" style="left:1008.500px;top:754px" width="10" height="8"><path d="M1 1.500l4 4 4-4" fill="none" stroke="#4d6185" stroke-width="2"/></svg>

</body></html>
